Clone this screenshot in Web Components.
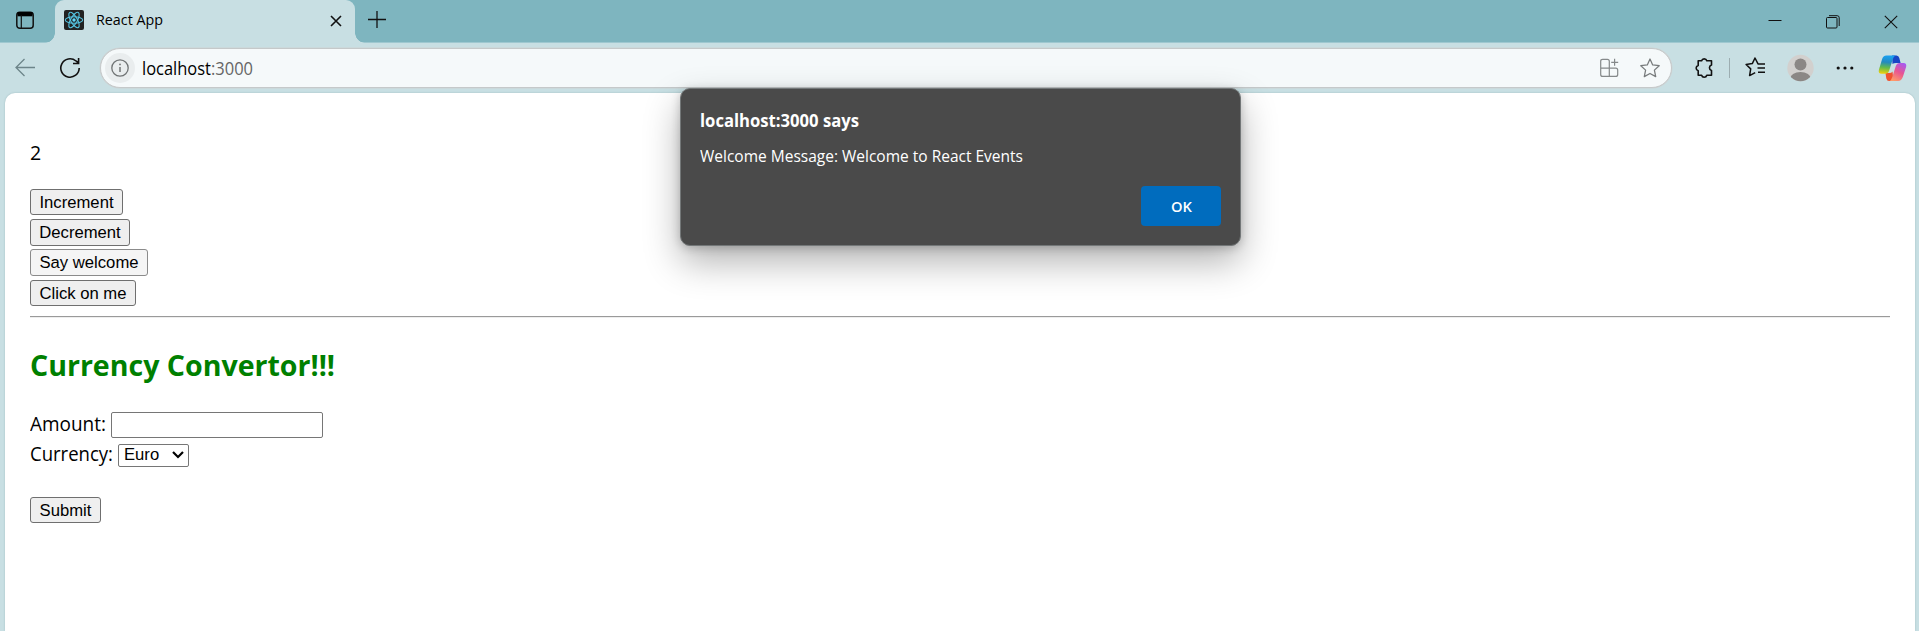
<!DOCTYPE html>
<html lang="en">
<head>
<meta charset="utf-8">
<title>React App</title>
<style>
html,body{margin:0;height:100%;overflow:hidden}
body{font-family:"Open Sans","Noto Sans",sans-serif;background:#c8dfe3;color:#000}
</style>
</head>
<body>
<edge-window></edge-window>
<script>
const define = (name, html) => customElements.define(name, class extends HTMLElement {
  constructor() {
    super();
    const t = document.createElement('template');
    t.innerHTML = html;
    this.attachShadow({mode: 'open'}).append(t.content.cloneNode(true));
    const w = this.getAttribute('w');
    if (w) this.style.width = w + 'px';
    const h = this.getAttribute('h');
    if (h) this.style.height = h + 'px';
  }
});

/* text fitted to a given width */
customElements.define('fit-text', class extends HTMLElement {
  connectedCallback() {
    const root = this.attachShadow({mode: 'open'});
    root.innerHTML = `<style>:host{display:inline-block;white-space:nowrap;text-align:left}span{display:inline-block;transform-origin:0 50%}</style><span><slot></slot></span>`;
    const span = root.querySelector('span'), w = +this.getAttribute('fit');
    if (span.offsetWidth) {
      this.style.width = w + 'px';
      span.style.transform = `scaleX(${w / span.getBoundingClientRect().width})`;
    }
  }
});

define('tab-strip', `<style>
:host{display:flex;height:43px;background:linear-gradient(#7eb5bf 0 42px,#9fc8d0 42px);box-sizing:border-box}
.actions{width:50px;padding:10px 0 0 15px;box-sizing:border-box}
svg{display:block}
.tab{display:flex;margin-left:5px;width:300px;height:43px;background:#c8dfe3;border-radius:9px 9px 0 0;position:relative;box-sizing:border-box;padding:10px 13px 0 9px}
.tab:before,.tab:after{content:"";position:absolute;bottom:0;width:10px;height:10px}
.tab:before{left:-10px;background:radial-gradient(circle at 0 0,transparent 9.5px,#c8dfe3 10px)}
.tab:after{right:-10px;background:radial-gradient(circle at 100% 0,transparent 9.5px,#c8dfe3 10px)}
.title{font-size:14.6px;line-height:20px;margin:-1px 0 0 12px;flex:1}
.x{margin-top:4.5px}
.plus{margin:9px 0 0 12px}
.win{margin-left:auto;display:flex;align-items:center;padding:0 21px 0 0;gap:44px}
</style>
<div class="actions"><svg width="20" height="20" fill="none" stroke="#111" stroke-width="1.5"><rect x="1.8" y="2.3" width="16.4" height="16" rx="3"/><path d="M2.5 4.2h15" stroke="#000" stroke-width="4.2"/><path d="M6.3 5v13" stroke-width="1.2"/></svg></div>
<div class="tab"><svg width="20" height="20"><rect width="20" height="20" rx="2" fill="#222"/><g fill="none" stroke="#55c3e0" stroke-width="1.1"><ellipse cx="10" cy="10" rx="8.7" ry="3.3"/><ellipse cx="10" cy="10" rx="8.7" ry="3.3" transform="rotate(60 10 10)"/><ellipse cx="10" cy="10" rx="8.7" ry="3.3" transform="rotate(120 10 10)"/></g><circle cx="10" cy="10" r="1.7" fill="#61dafb"/></svg>
<span class="title"><fit-text fit="67">React App</fit-text></span>
<svg class="x" width="12" height="12" stroke="#111" stroke-width="1.6"><path d="M1 1l10 10M11 1L1 11"/></svg></div>
<svg class="plus" width="20" height="20" stroke="#111" stroke-width="1.3"><path d="M10 2v17M1 10.5h18"/></svg>
<div class="win">
<svg width="14" height="14" stroke="#111"><path d="M.5 5.5h13"/></svg>
<svg width="14" height="14" fill="none" stroke="#111"><rect x=".5" y="2.5" width="10.5" height="10.5" rx="1"/><path d="M3 .7h8.2q2 0 2 2V11"/></svg>
<svg width="14" height="14" stroke="#111" stroke-width="1.1"><path d="M.8 .8l12.4 12.4M13.2 .8L.8 13.2"/></svg>
</div>`);

define('tool-bar', `<style>
:host{display:flex;height:50px;align-items:flex-start;background:#c8dfe3}
svg{display:block}
.back{margin:14px 0 0 14px}.reload{margin:14px 0 0 23px}
.bar{margin:5px 0 0 19px;width:1572px;height:40px;box-sizing:border-box;border:1px solid #c5c9ca;border-radius:20px;background:#f5f9fa;display:flex;align-items:center;padding:0 11px 0 4px;box-shadow:0 0 0 .5px #cdd3d4}
.info{width:30px;height:30px;border-radius:50%;background:#e9edee;display:grid;place-items:center}
.url{font-size:17.6px;line-height:24px;margin:-1px 0 0 7px;flex:1}
.url i{font-style:normal;color:#666}
.star{margin-left:21px}
.ext{margin:14px 0 0 22px}
.sep{width:1px;height:20px;background:#9cadb1;margin:15px 15px 0 15px}
.fav{margin-top:13px}
.av{margin:11px 0 0 21px}
.dots{margin:20px 0 0 22px}
.cop{margin:11px 0 0 24px}
</style>
<svg class="back" width="22" height="20" fill="none" stroke="#6d858a" stroke-width="1.3"><path d="M21 10.5H2M10.5 2L2 10.5 10.5 19"/></svg>
<svg class="reload" width="22" height="22" fill="none" stroke="#111" stroke-width="1.6"><path d="M20.2 11a9.2 9.2 0 1 1-3.2-7L19.6 6M19.6 1v5.5H14"/></svg>
<div class="bar"><span class="info"><svg width="18" height="18" fill="none" stroke="#707475" stroke-width="1.3"><circle cx="9" cy="9" r="8.2"/><path d="M9 8v5" stroke-width="1.5"/><circle cx="9" cy="5.4" r=".9" fill="#707475" stroke="none"/></svg></span>
<span class="url"><fit-text fit="111">localhost<i>:3000</i></fit-text></span>
<svg width="19" height="20" fill="none" stroke="#85898a" stroke-width="1.2"><path d="M9.3 10.2V3.2q0-1.9-1.9-1.9H2.6Q.7 1.3.7 3.2v13.2q0 2 2 2h13q2 0 2-2v-4.2q0-2-2-2H.7M9.3 10.2v8.2M14.6.8v7M11.2 4.3h7"/></svg>
<svg class="star" width="20" height="20" fill="none" stroke="#777b7c" stroke-width="1.25" stroke-linejoin="round"><path d="M10 1l2.7 5.9 6.5.8-4.8 4.4 1.3 6.5L10 15.5l-5.7 3.1 1.3-6.5L.8 7.7l6.500-.8z"/></svg></div>
<svg class="ext" width="20" height="22" fill="none" stroke="#111" stroke-width="1.6" stroke-linejoin="round"><path d="M4.2 3.8H7.6a2.7 2.7 0 0 1 5.2 0H17.500V8a2.800 2.800 0 0 0 0 5.400V18.300h-4.700a2.700 2.700 0 0 1-5.200 0H4.200v-4.500a2.800 2.800 0 0 1 0-5.400z"/></svg>
<span class="sep"></span>
<svg class="fav" width="21" height="22" fill="none" stroke="#111" stroke-width="1.5" stroke-linejoin="round"><path d="M20 7.9h-7L10 2 7.3 7.6l-6.2.9 4.6 4.4L4.6 19.6l5.6-3M12.5 12h7.5M13 16.2h7"/></svg>
<svg class="av" width="27" height="28"><defs><clipPath id="c"><circle cx="13.5" cy="14" r="13.2"/></clipPath></defs><circle cx="13.5" cy="14" r="13.2" fill="#d2d0ce"/><g fill="#8b8785" clip-path="url(#c)"><circle cx="13.5" cy="10.5" r="6"/><ellipse cx="13.5" cy="25" rx="10.5" ry="7"/></g></svg>
<svg class="dots" width="18" height="10"><g fill="#111"><circle cx="2.2" cy="5" r="1.6"/><circle cx="9" cy="5" r="1.6"/><circle cx="15.8" cy="5" r="1.6"/></g></svg>
<svg class="cop" width="29" height="29" viewBox="0 0 29 29"><defs>
<linearGradient id="a" x1=".3" y1="0" x2=".2" y2="1"><stop offset="0" stop-color="#1aa0f0"/><stop offset=".35" stop-color="#238ac0"/><stop offset=".65" stop-color="#63bb4b"/><stop offset="1" stop-color="#f3d00b"/></linearGradient>
<linearGradient id="b" x1=".8" y1="0" x2=".3" y2="1"><stop offset="0" stop-color="#a65af1"/><stop offset=".5" stop-color="#e85592"/><stop offset="1" stop-color="#ff9a68"/></linearGradient></defs>
<path d="M14 1.500h4.500q2.200 0 2.800 2.500l1.300 5H18q-2.500 0-3.500 1z" fill="#1746c5"/>
<path d="M7.500 19H11.500q2 0 3-1.500l1 9.500h-4.500q-2 0-2.700-2.500z" fill="#f05230"/>
<path d="M8.500 1.500h9q-2 1-2.800 4l-3.500 11q-1 3.200-4 3.200H3.500q-3.500 0-2.600-4l3-10q1.200-4.200 4.600-4.200z" fill="url(#a)"/>
<path d="M20 27H11.500q2-1 2.800-4l3.500-11q1-3 4-3H25.500q3.500 0 2.600 4l-3.200 9.800Q23.500 27 20 27z" fill="url(#b)"/></svg>`);

define('page-button', `<style>
:host{display:block;box-sizing:border-box;height:26px}
button{all:unset;box-sizing:border-box;display:block;width:100%;height:100%;border:1px solid #6f6f6f;border-radius:3px;background:#efefef;font:16.667px/21px "Liberation Sans",Arial,sans-serif;text-align:center;white-space:nowrap}
:host([hot]) button{background:#f5f5f5;border-color:#8b8b8b;line-height:23px}
</style><button><slot></slot></button>`);

define('web-page', `<style>
:host{display:block;flex:1;margin:0 4px 0 5px;background:#fff;border-radius:10px 10px 0 0;padding:0 25px;font-size:19.6px;box-shadow:0 0 2px #9bb9be}
p{margin:0;padding-top:46px;height:50px;line-height:28px}
.b{display:grid;gap:4px}
hr{margin:10px 0 0;border:0;height:1px;background:#9a9a9a;border-bottom:1px solid #eee}
h2{margin:0;color:green;font-size:29px;line-height:40px;padding-top:27px}
.row{display:flex;align-items:center;height:30px}
.row fit-text{margin-top:-4px}
.f{padding-top:25px}
input{all:unset;box-sizing:border-box;width:212px;height:26px;border:1px solid #767676;border-radius:2px;margin-left:5px}
.sel{box-sizing:border-box;width:71px;height:23px;border:1px solid #767676;border-radius:2px;margin-left:5px;display:flex;align-items:center;justify-content:space-between;padding:0 4px 0 5px;font:16.667px/20px "Liberation Sans",Arial,sans-serif}
</style>
<p>2</p>
<div class="b"><page-button w="93">Increment</page-button><page-button w="100" h="27" style="margin-bottom:-1px">Decrement</page-button><page-button w="118" h="27" hot>Say welcome</page-button><page-button w="106">Click on me</page-button></div>
<hr>
<h2><fit-text fit="305">Currency Convertor!!!</fit-text></h2>
<div class="f"><div class="row"><fit-text fit="76">Amount:</fit-text><input aria-label="Amount"></div>
<div class="row"><fit-text fit="83">Currency:</fit-text><div class="sel"><span>Euro</span><svg width="12" height="8" fill="none" stroke="#000" stroke-width="2.2"><path d="M1 1l5 5 5-5"/></svg></div></div></div>
<page-button w="71" style="margin-top:27px">Submit</page-button>`);

define('alert-dialog', `<style>
:host{position:absolute;left:680px;top:88px;width:561px;height:158px;box-sizing:border-box;background:#4a4a4a;border:1px solid #737778;border-radius:10px;color:#fff;padding:19px;display:flex;flex-direction:column;box-shadow:0 16px 36px rgba(0,0,0,.3),0 2px 10px rgba(0,0,0,.2)}
.t{font-weight:700;font-size:17.4px;line-height:24px}
.m{font-size:15.4px;line-height:22px;margin-top:14px}
button{all:unset;margin:auto 0 0 auto;width:80px;height:40px;border-radius:4px;background:#006cbe;text-align:center;font-size:14.6px;font-weight:600;line-height:38px}
</style>
<div class="t"><fit-text fit="159">localhost:3000 says</fit-text></div>
<div class="m"><fit-text fit="323">Welcome Message: Welcome to React Events</fit-text></div>
<button><fit-text fit="21">OK</fit-text></button>`);

define('edge-window', `<style>:host{display:flex;flex-direction:column;width:1919px;height:631px;background:#c8dfe3;position:relative;overflow:hidden}</style>
<tab-strip></tab-strip><tool-bar></tool-bar><web-page></web-page><alert-dialog></alert-dialog>`);
</script>
</body>
</html>
